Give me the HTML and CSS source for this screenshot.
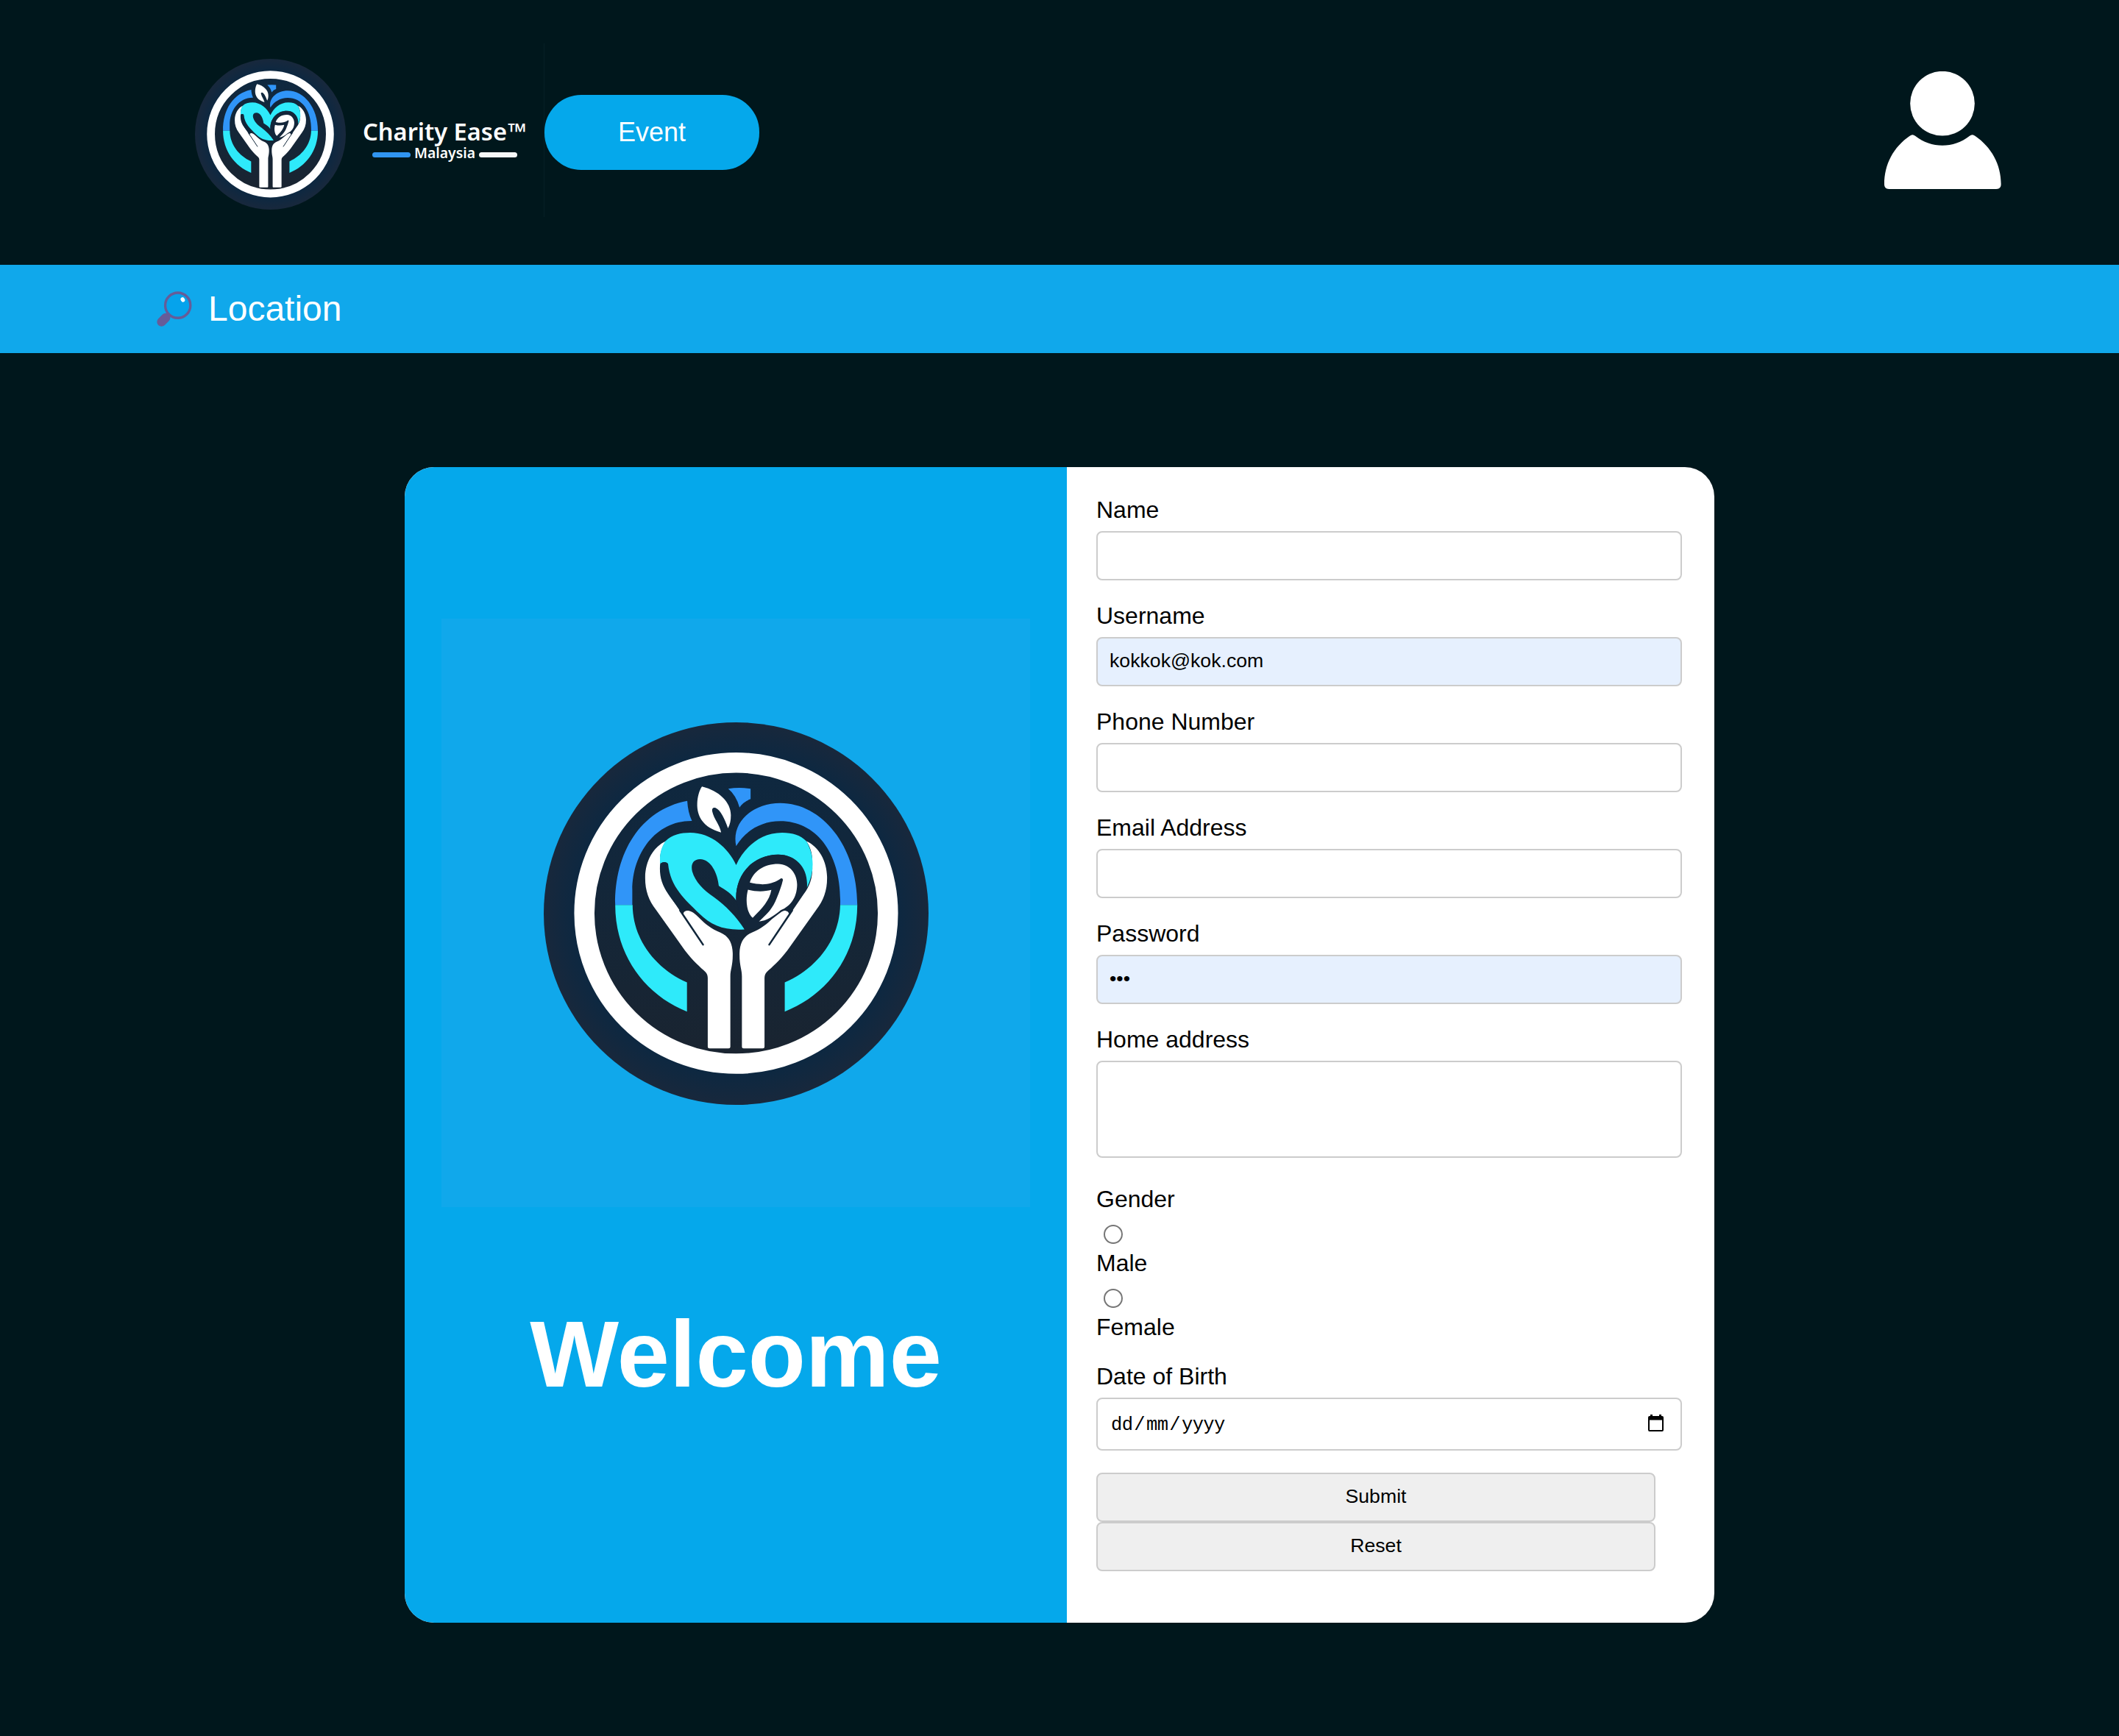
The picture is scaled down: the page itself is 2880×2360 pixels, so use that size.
FILE: index.html
```html
<!DOCTYPE html>
<html lang="en">
<head>
<meta charset="utf-8">
<title>Charity Ease Malaysia</title>
<link rel="stylesheet" href="styles.css">
</head>
<body>
<svg class="defs" aria-hidden="true">
  <defs>
    <linearGradient id="ink" x1="0" y1="0" x2="0" y2="1">
      <stop offset="0" stop-color="#0e2840"/>
      <stop offset="1" stop-color="#1a2430"/>
    </linearGradient>
    <radialGradient id="rim" cx=".5" cy=".5" r=".5">
      <stop offset=".84" stop-color="#0d2841"/>
      <stop offset="1" stop-color="#18283c"/>
    </radialGradient>
    <g id="hand">
      <path fill="#fff" d="M518 514C470 535 440 590 439 650C438 700 452 740 480 775L590 930C620 970 650 995 668 1012Q677 1022 677 1035V1296Q677 1303 684 1303H756Q763 1303 763 1296V1030C763 1000 773 990 772 940C771 900 755 875 725 862C690 848 670 832 640 802C620 782 608 778 597 779C585 781 582 790 585 800L528 716C500 680 492 640 496 600C493 570 500 540 518 514Z"/>
      <path fill="none" stroke="#10263a" stroke-width="7" stroke-linecap="round" d="M572 778L659 908"/>
    </g>
    <symbol id="mark" viewBox="53 62 1464 1456" preserveAspectRatio="none">
      <ellipse cx="785" cy="790" rx="732" ry="728" fill="url(#rim)"/>
      <ellipse cx="785" cy="788.5" rx="577.5" ry="573" fill="url(#ink)" stroke="#fff" stroke-width="77"/>
      <path fill="#3095f8" d="M599 361C601 390 606 415 617 437C480 435 390 560 390 700V757H325C322 560 420 395 599 361Z"/>
      <path fill="#3095f8" d="M785 533C765 440 850 369 953 369C1110 369 1246 530 1246 757H1181C1187 560 1090 438 953 438C880 438 820 475 785 533Z"/>
      <path fill="#3095f8" d="M755 315Q797 308 840 315V354Q812 364 798 386Q785 340 755 315Z"/>
      <path fill="#2eeafa" d="M325 757H391C392 890 480 1000 598 1052V1163C440 1100 325 950 325 757Z"/>
      <path fill="#2eeafa" d="M1181 757H1246C1246 950 1130 1100 970 1163V1052C1090 1000 1178 890 1181 757Z"/>
      <path fill="#fff" d="M655 306C720 322 765 365 765 415C765 435 762 452 754 465C742 430 725 395 708 388C698 384 692 390 694 400C700 430 722 450 728 481C660 463 635 420 637 370C638 345 645 320 655 306Z"/>
      <use href="#hand"/>
      <use href="#hand" transform="translate(1570 0) scale(-1 1)"/>
      <path fill="#2eeafa" d="M516 514C540 490 575 482 610 482C690 482 755 540 785 605C815 540 875 482 960 482C1000 482 1030 492 1052 514C1084 570 1084 630 1054 692C1055 620 1015 565 945 565C850 565 780 640 785 740C770 715 745 700 719 684C715 640 690 583 648 583C620 583 612 605 618 630C630 670 660 700 700 727C745 760 785 800 817 850C740 855 690 835 645 790C590 735 535 690 526 600C520 592 505 592 496 600C493 570 498 540 516 514Z"/>
      <path fill="#13263a" d="M785 740C780 640 850 565 945 565C1015 565 1062 620 1054 692C1040 725 1008 752 986 788C982 778 970 776 958 783C930 803 900 830 862 846L817 851Z"/>
      <path fill="none" stroke="#10263a" stroke-width="28" stroke-linecap="round" d="M511 608C514 690 545 720 582 765"/>
      <path fill="#fff" d="M837 672C850 630 890 601 945 601C990 601 1017 640 1017 680C1016 732 990 762 955 777C925 802 900 818 872 820C905 790 925 770 940 730C950 705 958 685 963 662C962 655 957 654 951 659C915 682 880 682 837 672Z"/>
      <path fill="#fff" d="M830 699C865 708 895 706 919 700C912 740 885 770 848 806C828 790 818 745 830 699Z"/>
    </symbol>
  </defs>
</svg>

<header class="topbar">
  <div class="brand">
    <svg class="brand-mark"><use href="#mark"/></svg>
    <div class="brand-text">
      <svg class="brand-name" width="230" height="44" viewBox="0 0 230 44"><text x="1" y="33" textLength="196" lengthAdjust="spacingAndGlyphs">Charity Ease</text><text class="tm" x="198" y="33" textLength="26" lengthAdjust="spacingAndGlyphs">™</text></svg>
      <div class="brand-sub">
        <span class="dash dash-blue"></span>
        <svg class="brand-country" width="91" height="30" viewBox="0 0 91 30"><text x="4" y="20.300" textLength="83" lengthAdjust="spacingAndGlyphs">Malaysia</text></svg>
        <span class="dash"></span>
      </div>
    </div>
  </div>
  <a class="event">Event</a>
  <svg class="user" viewBox="123 81 477 480">
    <circle cx="360" cy="212" r="131.5"/>
    <path d="M227 344Q238 335 249 344C315 396 405 396 471 344Q482 335 493 344C560 390 599 460 599 541Q599 561 579 561H143Q123 561 123 541C123 460 160 390 227 344Z"/>
  </svg>
</header>

<nav class="location">
  <svg class="lens" viewBox="101 138 142 143">
    <path stroke="#665c98" stroke-width="37" stroke-linecap="round" d="M120 262L137 245"/>
    <circle cx="186" cy="195" r="51" fill="#05a3ec" stroke="#665c98" stroke-width="10"/>
    <ellipse cx="206" cy="172" rx="8" ry="10" fill="#fff" transform="rotate(-30 206 172)"/>
  </svg>
  <span>Location</span>
</nav>

<main class="card">
  <section class="welcome">
    <div class="picture"><svg class="big-mark"><use href="#mark"/></svg></div>
    <h1>Welcome</h1>
  </section>
  <form class="form">
    <div class="field"><label>Name</label><input type="text"></div>
    <div class="field"><label>Username</label><input class="filled" type="text" value="kokkok@kok.com"></div>
    <div class="field"><label>Phone Number</label><input type="text"></div>
    <div class="field"><label>Email Address</label><input type="text"></div>
    <div class="field"><label>Password</label><input class="filled" type="password" value="kok"></div>
    <div class="field address"><label>Home address</label><textarea></textarea></div>
    <div class="gender">
      <span>Gender</span>
      <i class="radio"></i>
      <span>Male</span>
      <i class="radio"></i>
      <span>Female</span>
    </div>
    <div class="field">
      <label>Date of Birth</label>
      <div class="date">
        <span class="date-text"><b>dd</b>/<b>mm</b>/<b>yyyy</b></span>
        <svg class="calendar" viewBox="0 0 21 23"><path d="M3 0h3v2h9V0h3v2h1q2 0 2 2v17q0 2-2 2H2q-2 0-2-2V4q0-2 2-2h1zM2 7.500v13.500h17V7.500z" fill-rule="evenodd"/></svg>
      </div>
    </div>
    <div class="actions">
      <button type="button">Submit</button>
      <button type="button">Reset</button>
    </div>
  </form>
</main>
</body>
</html>
```
FILE: styles.css
```css
* { box-sizing: border-box; }

body {
  margin: 0;
  min-height: 2360px;
  background: #00171c;
  font-family: "Liberation Sans", Arial, sans-serif;
  font-size: 32px;
  line-height: 37px;
  color: #000;
}

svg { display: block; flex: none; }
.defs { position: absolute; width: 0; height: 0; }

/* header */
.topbar {
  display: flex;
  align-items: center;
  height: 360px;
  padding: 0 160px 0 265px;
}
.brand {
  display: flex;
  align-items: center;
  width: 475px;
  height: 236px;
  margin-bottom: 7px;
  border-right: 1px solid #061f25;
}
.brand-mark { width: 205px; height: 205px; margin-top: 12px; }
.brand-text { margin: 26px 0 0 22px; }
.brand-name, .brand-country { overflow: visible; }
.brand-name text {
  font: 600 32px "Noto Sans", sans-serif;
  fill: #fff;
}
.brand-name .tm { font-weight: 700; }
.brand-country text {
  font: 600 20px "Noto Sans", sans-serif;
  fill: #fff;
}
.brand-sub {
  display: flex;
  align-items: center;
  gap: 1px;
  height: 22px;
  padding-left: 14px;
  margin-top: -3px;
}
.dash { width: 52px; height: 7px; border-radius: 4px; background: #f7f7f7; }
.dash-blue { background: #3095f0; }
.event {
  width: 292px;
  height: 102px;
  border-radius: 50px;
  background: #05a8eb;
  color: #fff;
  font-size: 36px;
  line-height: 101px;
  text-align: center;
}
.user { width: 159px; height: 160px; margin: -7px 0 0 auto; fill: #fff; }

/* location strip */
.location {
  display: flex;
  align-items: center;
  height: 120px;
  padding-left: 213px;
  gap: 22px;
  background: #10a8eb;
  color: #fff;
  font-size: 48px;
  line-height: 56px;
}
.lens { width: 48px; height: 48px; }

/* registration card */
.card {
  display: flex;
  width: 1780px;
  height: 1571px;
  margin: 155px auto 0;
  border-radius: 40px;
  overflow: hidden;
  background: #fff;
}
.welcome {
  display: flex;
  flex-direction: column;
  align-items: center;
  width: 900px;
  padding-top: 206px;
  background: #05a8eb;
}
.picture {
  display: flex;
  justify-content: center;
  width: 800px;
  height: 800px;
  padding-top: 141px;
  background: #10a8eb;
}
.big-mark { width: 523px; height: 520px; }
h1 {
  margin: 126px 0 0;
  color: #fff;
  font-size: 128px;
  line-height: 148px;
}

.form { width: 880px; padding: 40px 44px 0 40px; }
.field { display: flex; flex-direction: column; gap: 10px; margin-bottom: 30px; }
.field.address { margin-bottom: 38px; }
input, textarea, .date, button {
  width: 796px;
  height: 67px;
  margin: 0;
  border: 2px solid #ccc;
  border-radius: 8px;
  background: #fff;
  color: #000;
  font: 26.667px "Liberation Sans", Arial, sans-serif;
}
input { padding: 0 16px 3px; }
input.filled { background: #e6f0fe; }
textarea { height: 132px; resize: none; }

.gender { display: flex; flex-direction: column; margin-bottom: 30px; }
.radio {
  width: 26px;
  height: 26px;
  margin: 16px 0 8px 10px;
  border: 2px solid #767676;
  border-radius: 50%;
}
.date {
  display: flex;
  align-items: center;
  justify-content: space-between;
  height: 72px;
  padding: 0 23px 0 16px;
}
.date-text { font: 25.500px "Liberation Mono", monospace; letter-spacing: -.64px; margin-top: 2px; }
.date-text b { font-weight: 400; padding: 0 2px; }
.calendar { width: 21px; height: 23px; margin-top: -3px; }
button {
  display: block;
  width: 760px;
  padding: 0 0 3px;
  background: #efefef;
}
```
